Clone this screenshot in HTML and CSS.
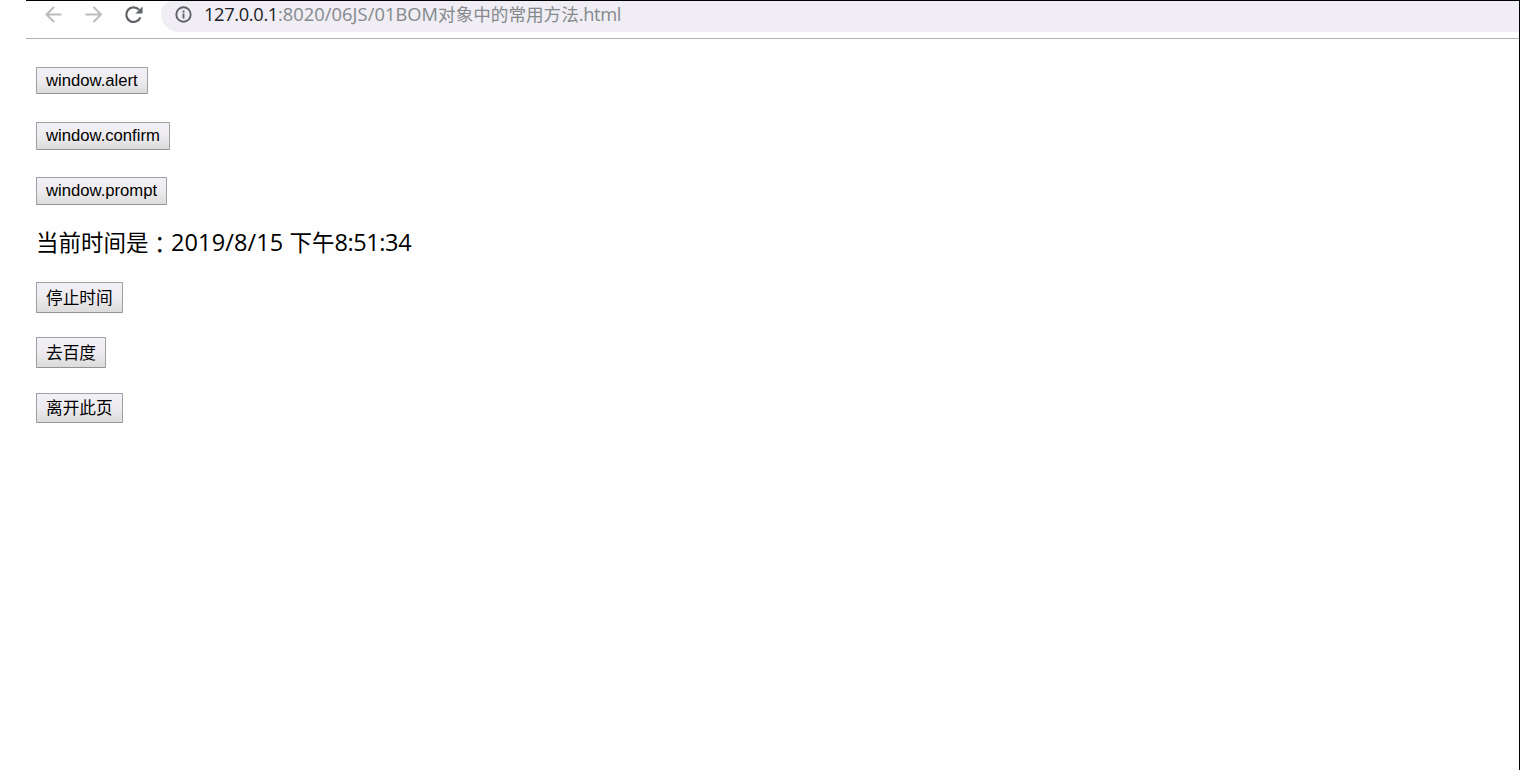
FILE: index.html
```
<!DOCTYPE html>
<html lang="zh-CN">
<head>
    <meta charset="UTF-8">
    <title>BOM对象中的常用方法</title>
    <link rel="stylesheet" href="styles.css">
</head>
<body>
    <div class="browser">
        <div class="toolbar">
            <svg class="nav-icon" viewBox="0 0 20 20"><path d="M18.500 10.500H4M11 3L3.500 10.500l7.500 7.500"/></svg>
            <svg class="nav-icon" viewBox="0 0 20 20"><path d="M2.500 10.500h15M10.500 3l7.500 7.500-7.500 7.500"/></svg>
            <svg class="nav-icon reload" viewBox="0 0 20 20"><path d="M17.400 13.300A7.300 7.300 0 1 1 16 5.700"/><path class="fill" d="M19.500 2.500v7h-7z"/></svg>
            <div class="address">
                <svg class="info" viewBox="0 0 18 18"><circle cx="9.500" cy="9.500" r="7.200"/><path d="M9.500 8.500v5M9.500 5.500v2"/></svg>
                <span class="url"><span class="host">127.0.0.1</span><span class="path">:8020/06JS/01BOM</span><span class="cn">对象中的常用方法</span><span class="ext">.html</span></span>
            </div>
        </div>
        <div class="page">
            <p><button class="alert-btn">window.alert</button></p>
            <p><button>window.confirm</button></p>
            <p><button>window.prompt</button></p>
            <p class="time">当前时间是<span class="colon" lang="zh-TW">：</span><span class="num date">2019/8/15 </span>下午<span class="num clock">8:51:34</span></p>
            <p><button class="cn-btn">停止时间</button></p>
            <p><button class="cn-btn">去百度</button></p>
            <p class="last"><button class="cn-btn">离开此页</button></p>
        </div>
    </div>
</body>
</html>
```
FILE: styles.css
```
* {
    box-sizing: border-box;
}

body {
    margin: 0;
    background-color: #fefefe;
    color: #000;
    font-family: "Open Sans", "Noto Sans CJK SC", sans-serif;
}

.browser {
    height: 770px;
    margin-left: 26px;
    border-top: 1px solid #000;
    border-right: 1px solid #000;
    overflow: hidden;
}

.toolbar {
    display: flex;
    height: 38px;
    padding-left: 17px;
    border-bottom: 1px solid #b3b3b3;
}

.nav-icon {
    width: 20px;
    height: 20px;
    margin: 3px 20px 0 0;
    fill: none;
    stroke: #bcbcbf;
    stroke-width: 2;
}

.reload {
    margin-right: 18px;
    stroke: #5f6368;
    stroke-width: 2.2;
}

.reload .fill {
    fill: #5f6368;
    stroke: none;
}

.address {
    display: flex;
    flex: 1;
    height: 31px;
    padding-left: 13px;
    background-color: #f0edf4;
    border-radius: 12px 0 0 18px;
}

.info {
    width: 18px;
    height: 18px;
    margin-top: 4px;
    fill: none;
    stroke: #5f6368;
    stroke-width: 1.9;
}

.url {
    margin-left: 12px;
    font-size: 18.3px;
    line-height: 26px;
    color: #84898c;
    white-space: nowrap;
}

.host {
    color: #202124;
    letter-spacing: -0.35px;
}

.path {
    letter-spacing: 0.05px;
}

.cn {
    font-size: 17.6px;
}

.ext {
    letter-spacing: -0.4px;
}

.page {
    padding: 28px 10px;
}

.page p {
    height: 28px;
    margin: 0 0 27px;
}

button {
    display: block;
    height: 28px;
    padding: 0 9px 1px;
    border: 1px solid #a0a0a4;
    border-bottom-color: #949498;
    border-radius: 1px;
    background: linear-gradient(#f2f0f7, #eeecf0 45%, #dcdcdc);
    color: #000;
    font-family: "Liberation Sans", Arial, sans-serif;
    font-size: 16.67px;
}

.alert-btn {
    height: 27px;
    padding-bottom: 0;
}

.page .time {
    height: 30px;
    margin: -5px 0 25px;
    font-size: 22.5px;
    line-height: 30px;
    white-space: nowrap;
}

.num {
    font-size: 23.5px;
}

.date {
    letter-spacing: 0.1px;
}

.clock {
    letter-spacing: -0.4px;
}

.colon {
    font-family: "Noto Sans CJK TC", sans-serif;
    line-height: 1;
    vertical-align: -2px;
}

.cn-btn {
    height: 31px;
    font-family: "Noto Sans CJK SC", sans-serif;
}

.last {
    padding-top: 1px;
}

.last .cn-btn {
    height: 30px;
    padding-bottom: 2px;
}
```
